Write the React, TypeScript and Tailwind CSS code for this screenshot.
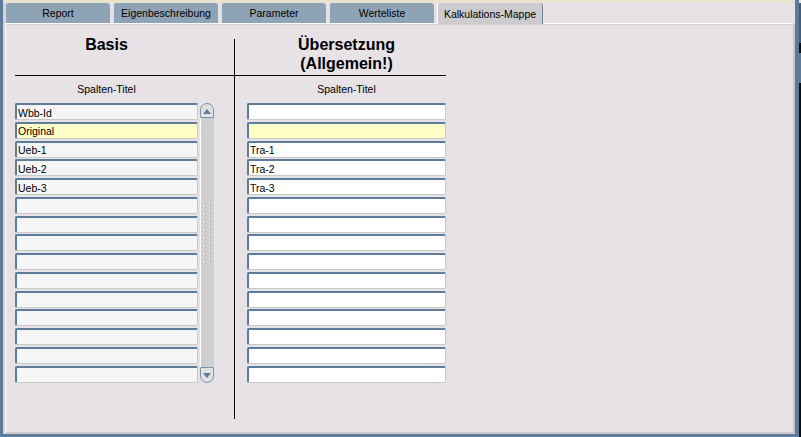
import React from "react";

const tabs = ["Report", "Eigenbeschreibung", "Parameter", "Werteliste", "Kalkulations-Mappe"];

const leftRows = ["Wbb-Id", "Original", "Ueb-1", "Ueb-2", "Ueb-3", "", "", "", "", "", "", "", "", "", ""];
const rightRows = ["", "", "Tra-1", "Tra-2", "Tra-3", "", "", "", "", "", "", "", "", "", ""];

function Field({ text, bg }: { text: string; bg: string }) {
  return (
    <div
      className={`h-[17px] shrink-0 flex items-center border-t-2 border-l-2 border-r border-b border-t-[#5d7b9b] border-l-[#5d7b9b] border-r-[#c9c9c9] border-b-[#c9c9c9] rounded-[2px] ${bg} text-[10.5px] leading-[12px] text-black pl-[1px] pt-[1px] whitespace-nowrap overflow-hidden`}
    >
      {text}
    </div>
  );
}

function Grip() {
  const dots = [];
  for (let i = 0; i < 8; i++) {
    const yr = i * 8;
    const yl = i * 8 + 3;
    dots.push(
      <g key={i}>
        <rect x={8} y={yr} width={1} height={1} fill="#ffffff" />
        <rect x={9} y={yr + 1} width={1} height={1} fill="#7f97b1" />
        <rect x={3} y={yl} width={1} height={1} fill="#ffffff" />
        <rect x={4} y={yl + 1} width={1} height={1} fill="#7f97b1" />
      </g>
    );
  }
  return (
    <svg width="13" height="66" viewBox="0 0 13 66" className="block">
      {dots}
    </svg>
  );
}

function ScrollBar() {
  return (
    <div className="ml-[2px] w-[14px] h-[280px] flex flex-col">
      <div className="h-[15px] shrink-0 rounded-t-[7px] border border-[#7a92ac] bg-[#e2e2e2] flex items-center justify-center">
        <svg width="8" height="5" viewBox="0 0 8 5" className="block mt-[1px]">
          <polygon points="4,0 8,5 0,5" fill="#5d7b9b" />
        </svg>
      </div>
      <div className="flex-1 bg-[#cfcfcf] border-l border-l-white pt-[85px]">
        <Grip />
      </div>
      <div className="h-[16px] shrink-0 rounded-b-[7px] border border-[#7a92ac] bg-[#e2e2e2] flex items-center justify-center">
        <svg width="8" height="5" viewBox="0 0 8 5" className="block">
          <polygon points="0,0 8,0 4,5" fill="#5d7b9b" />
        </svg>
      </div>
    </div>
  );
}

export default function App() {
  return (
    <div className="w-[801px] h-[437px] flex bg-[#5d7b9a] overflow-hidden font-['Liberation_Sans',Arial,sans-serif] text-black">
      {/* left blue edge */}
      <div className="w-[3px] shrink-0" />
      {/* main */}
      <div className="w-[792px] shrink-0 flex flex-col">
        <div className="flex-1 flex flex-col bg-[#e6e2e6] border-l-2 border-l-[#d2d0d2]">
          <div className="h-[3px] bg-[#e9e3cd] -ml-[2px]" />
          {/* tabs */}
          <div className="h-[20px] flex items-stretch gap-[3px] relative z-10">
            {tabs.map((t, i) =>
              i === 4 ? (
                <div
                  key={t}
                  className="w-[106px] -mb-px rounded-t-[3px] border-l border-l-white border-r border-r-[#6d87a3] bg-[#cdcbcd] flex items-center justify-center text-[10.5px] leading-[12px]"
                >
                  {t}
                </div>
              ) : (
                <div
                  key={t}
                  className="w-[105px] rounded-t-[3px] border-l border-l-[#dcdcdc] bg-[#8fa3b6] flex items-center justify-center text-[10.5px] leading-[12px]"
                >
                  {t}
                </div>
              )
            )}
          </div>
          {/* panel */}
          <div className="flex-1 border-t border-l border-t-white border-l-white border-r-2 border-r-[#c8c6c8] border-b-2 border-b-[#cfcdcf] shadow-[inset_0_1px_0_#d4d2d4]">
            <div className="flex pl-[9px]">
              {/* left column */}
              <div className="w-[219px] flex flex-col">
                <div className="h-[52px] border-b border-black">
                  <div className="w-[183px] pt-[11px] text-center font-bold text-[16px] leading-[19px]">Basis</div>
                </div>
                <div className="w-[183px] mt-[7px] mb-[8px] text-center text-[10.5px] leading-[12px]">Spalten-Titel</div>
                <div className="flex">
                  <div className="w-[183px] flex flex-col gap-[1.75px]">
                    {leftRows.map((r, i) => (
                      <Field key={i} text={r} bg={i === 1 ? "bg-[#ffffc8]" : "bg-[#f5f5f5]"} />
                    ))}
                  </div>
                  <ScrollBar />
                </div>
              </div>
              {/* vertical line */}
              <div className="w-px h-[380px] mt-[15px] bg-black shrink-0" />
              {/* right column */}
              <div className="w-[211px] flex flex-col">
                <div className="h-[52px] border-b border-black pl-[12px]">
                  <div className="pt-[11px] text-center font-bold text-[16px] leading-[19px]">
                    Übersetzung
                    <br />
                    (Allgemein!)
                  </div>
                </div>
                <div className="pl-[12px] mt-[7px] mb-[8px] text-center text-[10.5px] leading-[12px]">Spalten-Titel</div>
                <div className="pl-[12px] flex flex-col gap-[1.75px]">
                  {rightRows.map((r, i) => (
                    <Field key={i} text={r} bg={i === 1 ? "bg-[#ffffc8]" : "bg-white"} />
                  ))}
                </div>
              </div>
            </div>
          </div>
        </div>
        <div className="h-[3px] shrink-0" />
      </div>
      {/* right edge */}
      <div className="w-[4px] shrink-0 bg-[#5d7b9a]" />
      <div className="w-[2px] shrink-0 flex flex-col bg-[#0d0d0d]">
        <div className="h-[3px] bg-[#e9e3cd]" />
        <div className="h-[40px] bg-[#405c7a]" />
        <div className="h-[10px]" />
        <div className="h-[30px] bg-[#5d7b9a]" />
      </div>
    </div>
  );
}
